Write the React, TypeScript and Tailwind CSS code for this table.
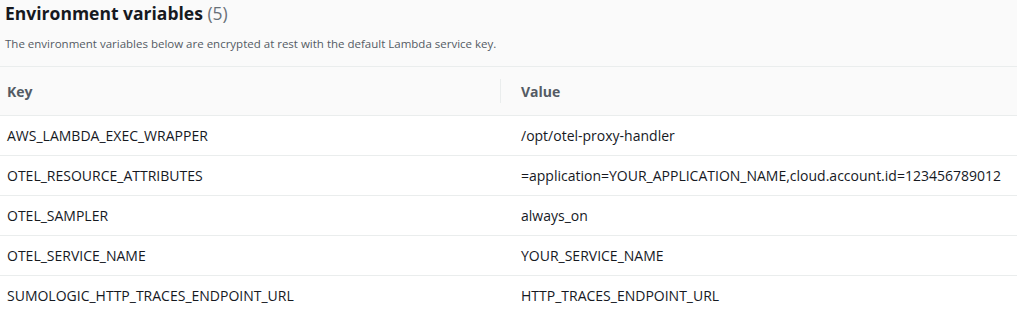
const rows = [
  { key: "AWS_LAMBDA_EXEC_WRAPPER", value: "/opt/otel-proxy-handler" },
  {
    key: "OTEL_RESOURCE_ATTRIBUTES",
    value: "=application=YOUR_APPLICATION_NAME,cloud.account.id=123456789012",
  },
  { key: "OTEL_SAMPLER", value: "always_on" },
  { key: "OTEL_SERVICE_NAME", value: "YOUR_SERVICE_NAME" },
  { key: "SUMOLOGIC_HTTP_TRACES_ENDPOINT_URL", value: "HTTP_TRACES_ENDPOINT_URL" },
];

export default function App() {
  return (
    <div className="w-[1017px] h-[311px] overflow-hidden bg-white font-['Open_Sans',sans-serif] text-[#16191f]">
      {/* Header */}
      <div className="bg-[#fafafa] px-[5px] pt-[1px] h-[66px]">
        <h2 className="text-[17.5px] font-bold leading-[24px]">
          Environment variables{" "}
          <span className="font-normal text-[#687078]">(5)</span>
        </h2>
        <p className="text-[11.5px] leading-[16px] text-[#545b64] mt-[11px]">
          The environment variables below are encrypted at rest with the default Lambda service key.
        </p>
      </div>

      <table className="w-full text-[14px] border-collapse">
        <thead className="bg-[#fafafa] border-y border-[#eaeded]">
          <tr className="h-[49px] text-left text-[#545b64] font-bold">
            <th className="pl-[7px] w-[500px]">Key</th>
            <th className="pl-[21px] relative">
              <span className="absolute left-0 top-[12px] h-[24px] border-l border-[#eaeded]" />
              Value
            </th>
          </tr>
        </thead>
        <tbody>
          {rows.map((row) => (
            <tr key={row.key} className="h-[40px] border-b border-[#eaeded] last:border-b-0">
              <td className="pl-[7px]">{row.key}</td>
              <td className="pl-[21px]">{row.value}</td>
            </tr>
          ))}
        </tbody>
      </table>
    </div>
  );
}
